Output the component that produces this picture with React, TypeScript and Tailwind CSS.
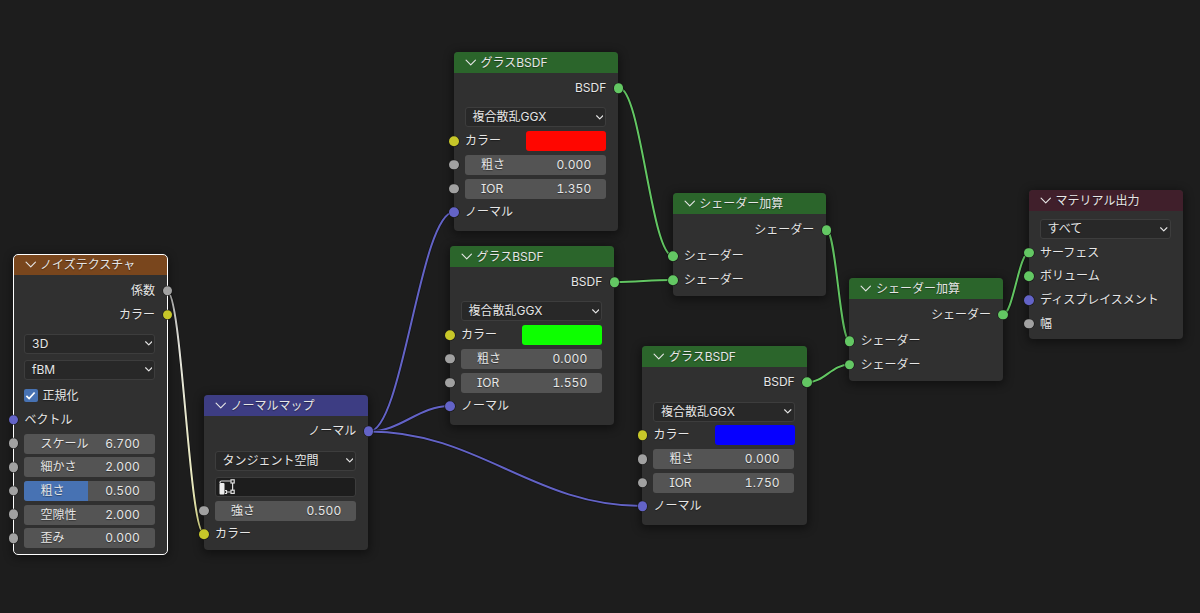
import type { CSSProperties, ReactNode } from 'react';

type SocketKind = 'shader' | 'color' | 'value' | 'vector';

const socketColors: Record<SocketKind, string> = {
  shader: 'bg-[#63c763]',
  color: 'bg-[#c7c729]',
  value: 'bg-[#a1a1a1]',
  vector: 'bg-[#6363c7]',
};

const Socket = ({ kind, side }: { kind: SocketKind; side: 'left' | 'right' }) => (
  <span
    className={`absolute top-1/2 size-[9.5px] -translate-y-1/2 rounded-full shadow-[0_0_0_0.6px_#181818] ${socketColors[kind]} ${
      side === 'left' ? '-left-[4.75px]' : '-right-[5px]'
    }`}
  />
);

const Chevron = ({ className }: { className: string }) => (
  <svg viewBox="0 0 12 8" className={className} fill="none" stroke="currentColor" strokeLinecap="round" strokeLinejoin="round">
    <path d="M1 1.2 6 6.2 11 1.2" />
  </svg>
);

interface NodeProps {
  title: string;
  header: string;
  place: string;
  selected?: boolean;
  children: ReactNode;
}

const Node = ({ title, header, place, selected, children }: NodeProps) => (
  <section className={`absolute rounded-[4px] bg-[#303030] shadow-[0_2px_8px_2px_rgba(0,0,0,0.4)] ${place}`}>
    {selected && <div className="absolute -inset-px rounded-[5px] border border-white" />}
    <header className={`flex h-[20.5px] items-center rounded-t-[4px] pl-[11px] ${header}`}>
      <Chevron className="mr-1 h-[7.5px] w-[11.5px] stroke-[1.2]" />
      <h2 className="pt-px leading-none">{title}</h2>
    </header>
    {children}
  </section>
);

const Output = ({ label, kind }: { label: string; kind: SocketKind }) => (
  <div className="relative flex h-[23.7px] items-center justify-end pr-3">
    {label}
    <Socket kind={kind} side="right" />
  </div>
);

const Input = ({ label, kind, children }: { label: string; kind: SocketKind; children?: ReactNode }) => (
  <div className="relative flex h-[23.7px] items-center justify-between pr-3 pl-[11px]">
    <Socket kind={kind} side="left" />
    {label}
    {children}
  </div>
);

const Field = ({ label, value, fill }: { label: string; value: string; fill?: string }) => (
  <div className="relative h-[23.7px] pt-[2px] pr-[12.5px] pl-[10.5px]">
    <Socket kind="value" side="left" />
    <div className="relative flex h-[20px] items-center justify-between overflow-hidden rounded-[3px] bg-[#545454] pr-[14.5px] pl-[16.5px]">
      {fill && <div className="absolute inset-y-0 left-0 bg-[#4772b3]" style={{ width: fill }} />}
      <span className="relative">{label}</span>
      <span className="relative tracking-[0.1px]">{value}</span>
    </div>
  </div>
);

const Select = ({ value, className = '' }: { value: string; className?: string }) => (
  <div
    className={`mr-[12px] ml-[10.5px] flex h-5 items-center justify-between rounded-[3px] border border-[#3d3d3d] bg-[#282828] pr-[2px] pl-[7px] ${className}`}
  >
    {value}
    <Chevron className="h-[5px] w-[7.5px] stroke-[1.8]" />
  </div>
);

const GlassNode = ({ place, swatch, ior }: { place: string; swatch: string; ior: string }) => (
  <Node title="グラスBSDF" header="bg-[#2b652b]" place={`h-[178.5px] w-[164.3px] ${place}`}>
    <div className="pt-[3.7px]">
      <Output label="BSDF" kind="shader" />
    </div>
    <Select value="複合散乱GGX" className="mt-[7.5px] mb-[2px]" />
    <Input label="カラー" kind="color">
      <span className={`h-5 w-20 rounded-[3px] ${swatch}`} />
    </Input>
    <Field label="粗さ" value="0.000" />
    <Field label="IOR" value={ior} />
    <Input label="ノーマル" kind="vector" />
  </Node>
);

const AddShaderNode = ({ place }: { place: string }) => (
  <Node title="シェーダー加算" header="bg-[#2b652b]" place={`h-[102.5px] w-[153.5px] ${place}`}>
    <div className="pt-[4.4px] pb-[2.6px]">
      <Output label="シェーダー" kind="shader" />
    </div>
    <Input label="シェーダー" kind="shader" />
    <Input label="シェーダー" kind="shader" />
  </Node>
);

const links = [
  { d: 'M167 291C182 291 189 533.5 204 533.5', color: 'url(#noise)' },
  { d: 'M369 431.5C403 431.5 420 212 454 212', color: '#6363c7' },
  { d: 'M369 431.5C401 431.5 418 406 450 406', color: '#6363c7' },
  { d: 'M369 431.5C478 431.5 533 506 642 506', color: '#6363c7' },
  { d: 'M619 88C641 88 651 256 673 256', color: '#63c763' },
  { d: 'M614.5 282C638 282 649 280 673 280', color: '#63c763' },
  { d: 'M826.5 230C836 230 840 341 849.5 341', color: '#63c763' },
  { d: 'M807 382.5C824 382.5 832 364.5 849.5 364.5', color: '#63c763' },
  { d: 'M1003 314.5C1013 314.5 1019 252.5 1029 252.5', color: '#63c763' },
];

const textStyle: CSSProperties = { fontFeatureSettings: '"cv08", "tnum"' };

export default function App() {
  return (
    <main
      className="relative h-[613px] w-[1200px] overflow-hidden bg-[#1d1d1d] font-['Inter','Noto_Sans_CJK_JP',sans-serif] text-[12px] leading-none whitespace-nowrap text-[#e6e6e6] [text-shadow:0_1px_1px_rgba(0,0,0,0.4)]"
      style={textStyle}
    >
      <svg className="absolute inset-0 h-full w-full" fill="none">
        <defs>
          <linearGradient id="noise" gradientUnits="userSpaceOnUse" x1="167" y1="291" x2="204" y2="534">
            <stop stopColor="#b0b0b0" />
            <stop offset="0.25" stopColor="#e4e4dc" />
            <stop offset="0.8" stopColor="#e8e8bd" />
            <stop offset="1" stopColor="#d4d480" />
          </linearGradient>
        </defs>
        {links.map((link) => (
          <g key={link.d}>
            <path d={link.d} stroke="#141414" strokeWidth="3.4" />
            <path d={link.d} stroke={link.color} strokeWidth="2" />
          </g>
        ))}
      </svg>

      <Node title="ノイズテクスチャ" header="bg-[#79461d]" place="left-[13.5px] top-[254.5px] h-[299.5px] w-[153.5px]" selected>
        <div className="pt-[4px]">
          <Output label="係数" kind="value" />
          <Output label="カラー" kind="color" />
        </div>
        <Select value="3D" className="mt-[7.5px]" />
        <Select value="fBM" className="mt-[6px]" />
        <label className="mt-[4px] flex h-[23.7px] items-center gap-[5px] pl-[10.5px]">
          <span className="flex size-[13.5px] items-center justify-center rounded-[2px] bg-[#4772b3]">
            <svg viewBox="0 0 12 12" className="size-[11px]" fill="none" stroke="white" strokeWidth="1.9">
              <path d="M1.5 6.3 4.5 9.3 10.5 2.7" />
            </svg>
          </span>
          正規化
        </label>
        <div className="pt-[0.3px]">
          <Input label="ベクトル" kind="vector" />
          <Field label="スケール" value="6.700" />
          <Field label="細かさ" value="2.000" />
          <Field label="粗さ" value="0.500" fill="49%" />
          <Field label="空隙性" value="2.000" />
          <Field label="歪み" value="0.000" />
        </div>
      </Node>

      <Node title="ノーマルマップ" header="bg-[#3d3d83]" place="left-[204px] top-[395px] h-[154.5px] w-[164.3px]">
        <div className="pt-[4px]">
          <Output label="ノーマル" kind="vector" />
        </div>
        <Select value="タンジェント空間" className="mt-[7.5px]" />
        <div className="mt-[6px] mr-[12px] mb-[2px] ml-[11px] flex h-5 items-center rounded-[3px] border border-[#3d3d3d] bg-[#1d1d1d] pl-[3px]">
          <svg viewBox="0 0 17 16" className="h-4 w-[17px]" fill="none" stroke="#dedede" strokeWidth="1.2">
            <path d="M1 4V3.2Q1 2 2.5 2H11.8M13.6 4V11.2M11.8 13H7" />
            <rect x="0.5" y="4" width="5" height="11.5" rx="1" fill="#efefef" stroke="none" />
            <rect x="12" y="0.8" width="3.2" height="3.2" />
            <rect x="12" y="11.2" width="3.2" height="3.2" />
            <path d="M6 11.5H7.5V14.5H6" />
          </svg>
        </div>
        <Field label="強さ" value="0.500" />
        <Input label="カラー" kind="color" />
      </Node>

      <GlassNode place="left-[454px] top-[52px]" swatch="bg-[#ff0600]" ior="1.350" />
      <GlassNode place="left-[450px] top-[246px]" swatch="bg-[#0dff00]" ior="1.550" />
      <GlassNode place="left-[642.4px] top-[346.2px]" swatch="bg-[#0600ff]" ior="1.750" />

      <AddShaderNode place="left-[672.8px] top-[193.3px]" />
      <AddShaderNode place="left-[849.4px] top-[278px]" />

      <Node title="マテリアル出力" header="bg-[#401f2b]" place="left-[1029px] top-[190.3px] h-[149px] w-[153.5px]">
        <Select value="すべて" className="mt-[8.5px] mb-[1.5px]" />
        <Input label="サーフェス" kind="shader" />
        <Input label="ボリューム" kind="shader" />
        <Input label="ディスプレイスメント" kind="vector" />
        <Input label="幅" kind="value" />
      </Node>
    </main>
  );
}
